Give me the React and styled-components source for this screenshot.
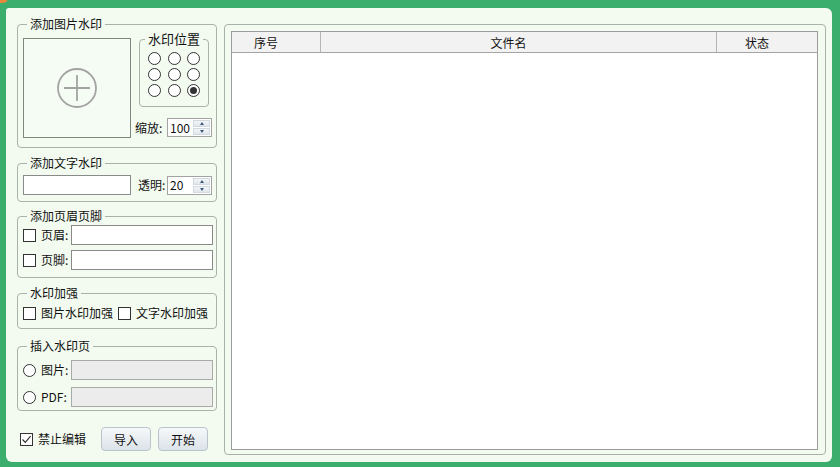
import React from "react";
import styled, { createGlobalStyle } from "styled-components";

const Global = createGlobalStyle`
  html, body {
    margin: 0;
    padding: 0;
    background: #3bae6d;
    font-family: "Noto Sans CJK SC", "Microsoft YaHei", sans-serif;
    font-size: 12px;
    color: #111;
  }
  * { box-sizing: border-box; }
`;

const Screen = styled.div`
  position: relative;
  width: 840px;
  height: 467px;
  padding: 8px 0 0 6px;
`;

const Corner = styled.span`
  position: absolute;
  left: -4px;
  top: -6px;
  width: 12px;
  height: 9px;
  border-radius: 50%;
  background: #e8883a;
`;

const Panel = styled.div`
  width: 826px;
  height: 454px;
  padding: 9px 6px 0 11px;
  display: flex;
  gap: 7px;
  background: #f3fbf0;
  border-radius: 3px 6px 6px 6px;
`;

const LeftCol = styled.div`
  width: 200px;
  display: flex;
  flex-direction: column;
`;

const Group = styled.fieldset`
  margin: ${(p) => p.$mt || 0}px 0 0 ${(p) => p.$ml || 0}px;
  padding: 0 0 0 5px;
  min-width: 0;
  width: ${(p) => p.$w || 200}px;
  height: ${(p) => p.$h}px;
  border: 1px solid #a9b1a9;
  border-radius: 4px;
  flex-shrink: 0;
`;

const Legend = styled.legend`
  margin-left: ${(p) => p.$ml ?? 4}px;
  padding: 0 3px;
  font-size: ${(p) => p.$fs || 12}px;
  line-height: 14px;
  height: 14px;
  white-space: nowrap;
`;

const Row = styled.div`
  display: flex;
  align-items: center;
  gap: ${(p) => p.$gap || 0}px;
  margin-top: ${(p) => p.$mt || 0}px;
  height: ${(p) => p.$h || 20}px;
`;

const ImageRow = styled.div`
  display: flex;
  align-items: flex-start;
  gap: 4px;
`;

const ImageBox = styled.div`
  margin-top: 7px;
  width: 108px;
  height: 100px;
  border: 1px solid #7f857f;
  background: #f5fcf3;
  display: flex;
  align-items: center;
  justify-content: center;
`;

const SideCol = styled.div`
  width: 77px;
  display: flex;
  flex-direction: column;
`;

const RadioGrid = styled.div`
  display: grid;
  grid-template-columns: repeat(3, 13px);
  column-gap: 6.5px;
  row-gap: 3px;
  padding: 6px 0 0 3px;
`;

const Radio = styled.span`
  width: 13px;
  height: 13px;
  border: 1px solid #333;
  border-radius: 50%;
  background: #fff;
  display: flex;
  align-items: center;
  justify-content: center;
  flex-shrink: 0;
  &::after {
    content: "";
    width: 7px;
    height: 7px;
    border-radius: 50%;
    background: ${(p) => (p.$on ? "#333" : "transparent")};
  }
`;

const Check = styled.span`
  width: 13px;
  height: 13px;
  border: 1px solid #333;
  background: #fff;
  flex-shrink: 0;
  display: flex;
  align-items: center;
  justify-content: center;
`;

const Label = styled.span`
  white-space: nowrap;
  line-height: 14px;
  width: ${(p) => (p.$w ? p.$w + "px" : "auto")};
`;

const TextBox = styled.div`
  width: ${(p) => p.$w}px;
  height: 20px;
  border: 1px solid ${(p) => (p.$off ? "#a9a9a9" : "#8a8a8a")};
  background: ${(p) => (p.$off ? "#ececec" : "#fff")};
`;

const SpinBox = styled.div`
  width: 45px;
  height: 19px;
  border: 1px solid #a3a3a3;
  background: #fff;
  display: flex;
  align-items: center;
  padding: 1px 1px 1px 2px;
`;

const SpinValue = styled.span`
  flex: 1;
  line-height: 14px;
`;

const SpinButtons = styled.div`
  width: 17px;
  height: 100%;
  display: flex;
  flex-direction: column;
  gap: 1px;
`;

const SpinBtn = styled.div`
  flex: 1;
  background: linear-gradient(#f3f6f9, #dfe6ec);
  border: 1px solid #d2dae0;
  display: flex;
  align-items: center;
  justify-content: center;
  &::after {
    content: "";
    border-left: 2.5px solid transparent;
    border-right: 2.5px solid transparent;
    ${(p) => (p.$down ? "border-top" : "border-bottom")}: 3px solid #3d5a7a;
  }
`;

const Bottom = styled.div`
  display: flex;
  align-items: center;
  margin-top: 16px;
  padding-left: 3px;
  height: 24px;
`;

const Button = styled.button`
  width: 50px;
  height: 24px;
  margin-left: ${(p) => p.$ml}px;
  border: 1px solid #b9c4cc;
  border-radius: 4px;
  background: linear-gradient(#f6f8fa, #dce3e9);
  font: inherit;
  color: #111;
  padding: 0;
`;

const ListGroup = styled.fieldset`
  margin: 7px 0 0 0;
  padding: 6px 7px 4px 6px;
  width: 602px;
  height: 431px;
  border: 1px solid #a9b1a9;
  border-radius: 4px;
  min-width: 0;
`;

const Table = styled.div`
  height: 100%;
  border: 1px solid #9c9c9c;
  background: #fff;
`;

const Header = styled.div`
  display: grid;
  grid-template-columns: 89px 396px 1fr;
  height: 21px;
  background: #f2f2f2;
  border-bottom: 1px solid #a5a5a5;
`;

const HeadCell = styled.div`
  display: flex;
  align-items: center;
  justify-content: center;
  padding-right: 20px;
  border-right: ${(p) => (p.$last ? "none" : "1px solid #b5b5b5")};
`;

const Spin = ({ value }) => (
  <SpinBox>
    <SpinValue>{value}</SpinValue>
    <SpinButtons>
      <SpinBtn />
      <SpinBtn $down />
    </SpinButtons>
  </SpinBox>
);

const PlusIcon = () => (
  <svg width="42" height="42" viewBox="0 0 42 42">
    <circle cx="21" cy="21" r="19" fill="none" stroke="#a3a3a3" strokeWidth="1.8" />
    <path d="M21 8 V34 M8 21 H34" stroke="#a3a3a3" strokeWidth="1.8" />
  </svg>
);

const Tick = () => (
  <svg width="11" height="11" viewBox="0 0 11 11">
    <path d="M1.5 5.5 L4.3 8.4 L9.6 2.2" fill="none" stroke="#333" strokeWidth="1.2" />
  </svg>
);

export default function App() {
  return (
    <>
      <Global />
      <Screen>
        <Corner />
        <Panel>
          <LeftCol>
            <Group $h={131}>
              <Legend>添加图片水印</Legend>
              <ImageRow>
                <ImageBox>
                  <PlusIcon />
                </ImageBox>
                <SideCol>
                  <Group $w={70} $h={75} $ml={4} $mt={1}>
                    <Legend $ml={0} $fs={13}>水印位置</Legend>
                    <RadioGrid>
                      {Array.from({ length: 9 }).map((_, i) => (
                        <Radio key={i} $on={i === 8} />
                      ))}
                    </RadioGrid>
                  </Group>
                  <Row $mt={11} $h={19} $gap={2}>
                    <Label $w={30}>缩放:</Label>
                    <Spin value="100" />
                  </Row>
                </SideCol>
              </ImageRow>
            </Group>

            <Group $h={46} $mt={8}>
              <Legend>添加文字水印</Legend>
              <Row $mt={5}>
                <TextBox $w={108} />
                <Label style={{ marginLeft: 7 }} $w={29}>透明:</Label>
                <Spin value="20" />
              </Row>
            </Group>

            <Group $h={69} $mt={7}>
              <Legend>添加页眉页脚</Legend>
              <Row $mt={2} $gap={5}>
                <Check />
                <Label $w={25}>页眉:</Label>
                <TextBox $w={142} />
              </Row>
              <Row $mt={5} $gap={5}>
                <Check />
                <Label $w={25}>页脚:</Label>
                <TextBox $w={142} />
              </Row>
            </Group>

            <Group $h={43} $mt={8}>
              <Legend>水印加强</Legend>
              <Row $mt={3} $gap={5}>
                <Check />
                <Label>图片水印加强</Label>
                <Check />
                <Label>文字水印加强</Label>
              </Row>
            </Group>

            <Group $h={72} $mt={10}>
              <Legend>插入水印页</Legend>
              <Row $mt={7} $gap={5}>
                <Radio />
                <Label $w={25}>图片:</Label>
                <TextBox $w={142} $off />
              </Row>
              <Row $mt={7} $gap={5}>
                <Radio />
                <Label $w={25}>PDF:</Label>
                <TextBox $w={142} $off />
              </Row>
            </Group>

            <Bottom>
              <Check>
                <Tick />
              </Check>
              <Label style={{ marginLeft: 5 }}>禁止编辑</Label>
              <Button $ml={15}>导入</Button>
              <Button $ml={7}>开始</Button>
            </Bottom>
          </LeftCol>

          <ListGroup>
            <Table>
              <Header>
                <HeadCell>序号</HeadCell>
                <HeadCell>文件名</HeadCell>
                <HeadCell $last>状态</HeadCell>
              </Header>
            </Table>
          </ListGroup>
        </Panel>
      </Screen>
    </>
  );
}
